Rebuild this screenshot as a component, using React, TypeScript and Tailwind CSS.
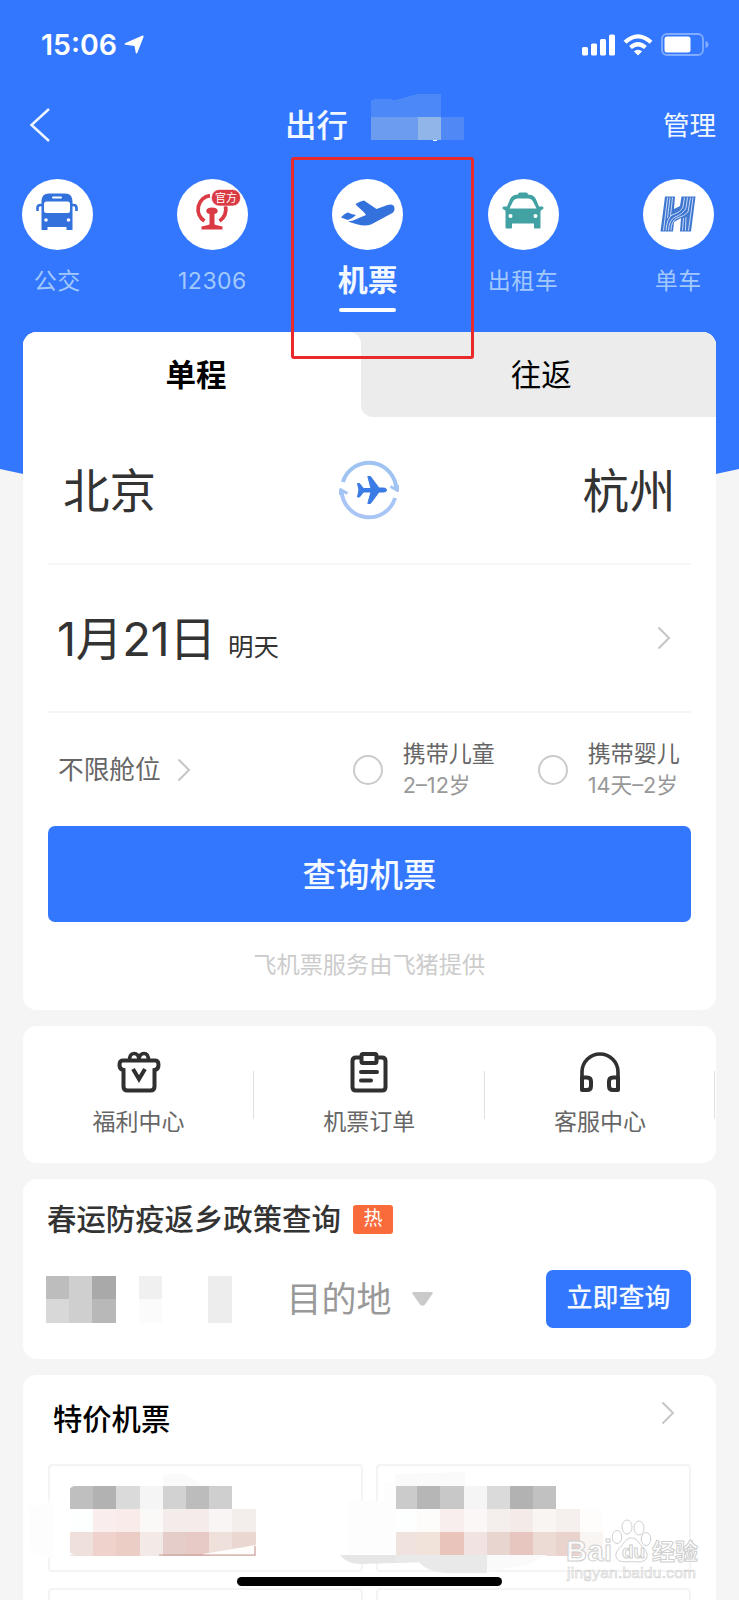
import type { ReactNode } from "react";

function Chevron({ className = "" }: { className?: string }) {
  return (
    <svg className={className} width="14" height="24" viewBox="0 0 14 24" fill="none">
      <path d="M1.500 1.500 12 12 1.500 22.500" stroke="#c6c6c6" strokeWidth="2" />
    </svg>
  );
}

function BusIcon() {
  return (
    <svg className="-mt-1" width="42" height="38" viewBox="0 0 42 38" fill="#3371dc">
      <path d="M5.500 37V9C5.500 3 8 .8 13 .5h16c5 .3 7.500 2.500 7.500 8.500v28h-6v-3h-19v3z" />
      <rect x="16" y="3.500" width="10" height="2" rx="1" fill="#fff" />
      <rect x="8" y="8.500" width="26" height="11.500" rx="2.500" fill="#fff" />
      <circle cx="10" cy="27" r="1.800" fill="#fff" />
      <circle cx="32.500" cy="27" r="1.800" fill="#fff" />
      <path d="M6 12H4.500Q1.500 12 1.500 15v3M36 12h1.500q3 0 3 3v3" fill="none" stroke="#3371dc" strokeWidth="2.600" />
    </svg>
  );
}

function RailIcon() {
  return (
    <svg width="62" height="62" viewBox="0 0 62 62" fill="#d93a43">
      <path d="M29 12.700A13.800 13.800 0 0 0 23.500 38M38.500 38A13.800 13.800 0 0 0 44.500 23" fill="none" stroke="#d93a43" strokeWidth="3.800" />
      <path d="M25.300 27.500q.5-3 5.700-3t5.700 3q.3 2.500-3.200 3.500v10.500q3 1.200 8 2v3h-21v-3q5-.8 8-2V31q-3.500-1-3.200-3.500z" />
      <rect x="30.500" y="6.500" width="29" height="16.500" rx="8" stroke="#fff" strokeWidth="0.600" />
      <text x="45" y="18.800" textAnchor="middle" fontSize="11" fill="#fff" className="font-['Noto_Sans_CJK_SC',sans-serif]">官方</text>
    </svg>
  );
}

function PlaneIcon() {
  return (
    <svg className="-mt-px" width="56" height="28" viewBox="0 0 56 28" fill="#3371dc">
      <path d="M1 17.500Q5 13 8 12.500 11 14 16 15q-4 4-8 5zM8 21.500l5-1 13-5.500C23 10 18.500 8 15.500 4Q20 1 24 .5l12.500 8.500 11-4c4-1.500 7 0 7 3.500 0 3-1 4-4 5.500L31 24.500c-7 2.500-14 0-23-3z" />
    </svg>
  );
}

function TaxiIcon() {
  return (
    <svg className="-mt-2" width="42" height="37" viewBox="0 0 42 37" fill="#42a2a3">
      <path d="M16 2.500Q16 .5 18 .5h6q2 0 2 2c5 .5 7 2 8.500 6l2.500 6h3.500q1 0 1 1.500t-1.500 1.500L38.500 19v16.500q0 1-1 1h-4.500q-1 0-1-1v-4H10v4q0 1-1 1H4.500q-1 0-1-1V19L2 17.500Q.5 17.500.5 16T1.500 14.500H5l2.500-6c1.500-4 3.500-5.500 8.500-6z" />
      <path d="M7.500 16.500 11 9.500Q12.500 6.500 16 6.500h10q3.500 0 5 3l3.500 7z" fill="#fff" />
      <circle cx="8.500" cy="24" r="2" fill="#fff" />
      <circle cx="33.500" cy="24" r="2" fill="#fff" />
    </svg>
  );
}

function BikeIcon() {
  return (
    <svg width="36" height="36" viewBox="0 0 36 36">
      <path d="M5 .5h10L14 13l6-3 1.500-9.500H35.500L31 35.500H20L21 22l-7 4-1 9.500H.5z" fill="#3f76cf" />
      <path
        d="M7.500 1.500 3.500 34.500M10 1.500 7.500 22M12.500 1.500 10.500 20M24.500 1.500 23 11Q21 16 12 19 7 22 6 34.500M27.500 1.500 26 12Q23 18 15 21 9 24 8.500 34.500M30.500 1.500 28 16Q25 20 17 22 11 25 11 34.500M33 1.500 28.500 34.500M26 21 25.500 34.500M23.500 22 22.500 34.500"
        fill="none"
        stroke="#d6e4fb"
        strokeWidth="0.900"
      />
    </svg>
  );
}

function NavItem({ label, active, children }: { label: string; active?: boolean; children: ReactNode }) {
  return (
    <div className="flex w-[155.300px] flex-col items-center">
      <div className="flex size-[71px] items-center justify-center rounded-full bg-white">{children}</div>
      {active ? (
        <>
          <span className="mt-[10px] text-[30px] leading-[40px] font-bold text-[#f1f8ff]">{label}</span>
          <span className="mt-[8px] h-1 w-[57px] rounded-full bg-white" />
        </>
      ) : (
        <span className="mt-[11px] text-[23px] leading-[40px] tracking-[0.500px] text-[#a2c9fd]">{label}</span>
      )}
    </div>
  );
}

function SwapIcon() {
  return (
    <svg width="62" height="62" viewBox="0 0 62 62" fill="none">
      <path d="M4.900 23A27.300 27.300 0 0 1 58.300 31" stroke="#a0c4f2" strokeWidth="4" />
      <path d="M57.100 39A27.300 27.300 0 0 1 3.700 31" stroke="#a9c5f5" strokeWidth="4" />
      <path d="M59.500 26v5.500l-7-4M2.500 36v-5.500l7 4" stroke="#a4c4f3" strokeWidth="3" strokeLinejoin="round" />
      <path d="M19.500 24.500h2l4 5h7.500L29.800 17.500h2.700l8.500 11.500h4.500q3 0 3 2t-3 2H41l-8.500 11.500h-2.700L33 33h-7.500l-4 5h-2l1.500-7z" fill="#3a7be6" stroke="#3a7be6" strokeLinejoin="round" />
    </svg>
  );
}

function GiftIcon() {
  return (
    <svg className="ml-[2px]" width="44" height="42" viewBox="0 0 44 42" fill="none" stroke="#303030" strokeWidth="4">
      <path d="M12.500 9.500q0-7 4.500-7t5 6q.5-6 5-6t4.500 7" strokeWidth="3.600" />
      <path d="M5.500 9.500h33q3 0 3 4.500t-4 5v16.500q0 4-4 4H10.500q-4 0-4-4V19q-4-.5-4-5t3-4.500z" />
      <path d="m16 18 6 10 6-10" />
    </svg>
  );
}

function OrderIcon() {
  return (
    <svg width="40" height="42" viewBox="0 0 40 42" fill="none" stroke="#303030" strokeWidth="4">
      <path d="M12 6.500H7q-3.500 0-3.500 3.500v26q0 3.500 3.500 3.500h26q3.500 0 3.500-3.500V10q0-3.500-3.500-3.500h-5" />
      <rect x="12.500" y="3" width="15" height="9" rx="1.500" />
      <path d="M12 21h16M12 29.500h10" strokeLinecap="round" />
    </svg>
  );
}

function HeadsetIcon() {
  return (
    <svg width="42" height="42" viewBox="0 0 42 42" fill="none" stroke="#303030" strokeWidth="4">
      <path d="M3 39V21a18 18 0 0 1 36 0v18" strokeWidth="3.600" />
      <path d="M3 26.500h5q4 0 4 4V35q0 4-4 4H3zM39 26.500h-5q-4 0-4 4V35q0 4 4 4h5z" strokeLinejoin="round" />
    </svg>
  );
}

function Mosaic({ rows, className = "" }: { rows: string[][]; className?: string }) {
  return (
    <svg className={className} width={rows[0].length * 23.2} height={rows.length * 23.2} shapeRendering="crispEdges">
      {rows.map((row, y) =>
        row.map((fill, x) => (
          <rect key={`${x}-${y}`} x={x * 23.2} y={y * 23.2} width="23.3" height="23.3" fill={fill} />
        )),
      )}
    </svg>
  );
}

function Option({ title, note, className = "" }: { title: string; note: string; className?: string }) {
  return (
    <div className={`flex items-center ${className}`}>
      <span className="size-[30px] shrink-0 rounded-full border-[2.500px] border-[#cbcbcb]" />
      <div className="ml-5 flex flex-col whitespace-nowrap">
        <span className="text-[23px] leading-[31px] text-[#666]">{title}</span>
        <span className="text-[21.700px] leading-[31px] text-[#999]">{note}</span>
      </div>
    </div>
  );
}

const visitorRows = [
  ["#bdbdbd", "#cfcfcf", "#a9a9a9", "#fff", "#f0f0f0", "#fff", "#fff", "#ededed"],
  ["#d8d8d8", "#cfcfcf", "#b8b8b8", "#fff", "#fbfbfb", "#fff", "#fff", "#ededed"],
];
const dealLeft = [
  ["#bfbfbf", "#b2b2b2", "#dadada", "#f5f5f5", "#d2d2d2", "#bcbcbc", "#cfcfcf", "#fff"],
  ["#fdfefe", "#f9eeed", "#f9ebea", "#fbf9f8", "#f4eceb", "#f4ebea", "#f8f5f4", "#f3eeec"],
  ["#f0e0dc", "#eed2cb", "#ebcdc6", "#f3e9e6", "#e5cec9", "#e7c9c5", "#efe0db", "#ead7d1"],
];
const dealRight = [
  ["#cbcbcb", "#b6b6b6", "#c8c8c8", "#f5f5f5", "#dadada", "#b2b2b2", "#c1c1c1", "#fff", "#fff"],
  ["#fdfefe", "#fdfcfb", "#f9eeee", "#fbf7f7", "#f4efed", "#f4eae8", "#f8f5f3", "#f5efed", "#fefdfc"],
  ["#f0e2de", "#f1e2da", "#e8c4ba", "#f0e3e2", "#e8d5cf", "#e6c6bf", "#ecdad5", "#ead3cd", "#f9f5f3"],
];

function Smudges() {
  return (
    <svg className="absolute top-[1464px] left-[23px]" width="693" height="120">
      <path d="M6 42q20-1 24-10v62H26Q10 92 6 82zM325 37h36V18h12v73h-48z" fill="#fdfdfd" />
      <path d="M140 12q20-8 40 10h-40zM372 10l70-2v14h-70z" fill="#fafafa" />
      <path d="M46 27v-5h5q-4 1-5 5zM46 86q2 5 6 5h-6z" fill="#fff" />
      <path d="m180 90 53-9v10h-53z" fill="#fffdfc" />
      <path d="M136 91h96V82" fill="none" stroke="#c79c96" strokeWidth="1.200" />
      <path d="M317 91h87v7l-66 2q-14 0-21-9z" fill="#e6e6e6" />
      <path d="M372 91h92v18h-40q-20-1-28-11h-24z" fill="#e9e9ea" />
      <path d="M464 91h60l-20 10-40 7z" fill="#fbfafa" />
    </svg>
  );
}

function Watermark() {
  return (
    <svg
      className="absolute top-[1515px] left-[564px] font-['Liberation_Sans','Noto_Sans_CJK_SC',sans-serif]"
      width="140"
      height="70"
      fill="#fff"
      fillOpacity="0.850"
      stroke="#cfcfcf"
      strokeWidth="1"
    >
      <text x="2" y="46" fontSize="29" fontWeight="bold" textLength="46">Bai</text>
      <ellipse cx="53" cy="22" rx="4.800" ry="6.500" />
      <ellipse cx="63" cy="12" rx="5" ry="7" />
      <ellipse cx="75" cy="13" rx="5" ry="7" />
      <ellipse cx="82" cy="24" rx="4.800" ry="6.500" />
      <path d="M67.500 23c5 0 7 4 10 8 4 4 7 7 5 12s-9 4-15 3.500c-6 .5-13 1-15-3.500s1-8 5-12c3-4 5-8 10-8z" />
      <text x="58" y="43" fontSize="19" fontWeight="bold">du</text>
      <text x="88" y="45" fontSize="23" fontWeight="bold">经验</text>
      <text x="3" y="63" fontSize="15.500" textLength="129" strokeWidth="0.600">jingyan.baidu.com</text>
    </svg>
  );
}

export default function App() {
  return (
    <div className="relative h-[1600px] w-[739px] overflow-hidden bg-[#f5f5f5] font-['Inter','Noto_Sans_CJK_SC',sans-serif]">
      <header className="h-[332px] bg-[#3377ff] text-white">
        <div className="flex h-[88px] items-center justify-between pr-[30px] pl-[41px]">
          <div className="flex items-center">
            <span className="mt-[2px] text-[28.500px] leading-10 font-semibold">15:06</span>
            <svg className="mt-[2px] ml-[7px]" width="20" height="20" viewBox="0 0 20 20" fill="#fff">
              <path d="M18 .8Q20.200 0 19.500 2L13.500 17.500q-1.200 2-1.800 0L10.500 11 1.500 9.800Q-.5 9 1.500 8z" />
            </svg>
          </div>
          <div className="mt-px flex items-center">
            <svg width="34" height="22" viewBox="0 0 34 22" fill="#fff">
              <rect x="1" y="13" width="6" height="8.500" rx="1.500" />
              <rect x="10" y="9.500" width="6" height="12" rx="1.500" />
              <rect x="19" y="5" width="6" height="16.500" rx="1.500" />
              <rect x="28" y="0.500" width="6" height="21" rx="1.500" />
            </svg>
            <svg className="ml-2" width="30" height="22" viewBox="0 0 30 22" fill="none" stroke="#fff" strokeWidth="4.200">
              <path d="M2 8.300Q15-3.500 28 8.300M7.500 13.500q7.500-6.500 15 0" />
              <path d="m10.800 17.200 4.200 4.300 4.200-4.300q-4.200-3-8.400 0z" fill="#fff" stroke="none" />
            </svg>
            <svg className="ml-2" width="48" height="23" viewBox="0 0 48 23" fill="none">
              <rect x="1" y="1" width="41" height="21" rx="5" stroke="#81acff" strokeWidth="1.800" />
              <rect x="3.500" y="3.500" width="26" height="16" rx="2.500" fill="#fff" />
              <path d="M44.500 8q3 1 3 3.500t-3 3.500z" fill="#81acff" />
            </svg>
          </div>
        </div>

        <div className="flex h-[74px] items-center pr-[23px] pl-[29px]">
          <svg width="22" height="34" viewBox="0 0 22 34" fill="none">
            <path d="M20 1 2.500 17 20 33" stroke="#eef7ff" strokeWidth="2.500" />
          </svg>
          <h1 className="mt-[2px] ml-[234px] text-[31.500px] leading-[46px] font-medium text-[#f1f8ff]">出行</h1>
          <svg className="mt-[-12px] ml-[23px]" width="94" height="50" shapeRendering="crispEdges">
            <path d="M0 6q12-3 24 0L47 0h23v23H0z" fill="#4c88f8" />
            <rect y="23" width="47" height="23" fill="#6c9cee" />
            <rect x="47" y="23" width="23" height="23" fill="#90b5e9" />
            <rect x="70" y="23" width="23" height="23" fill="#5089f6" />
            <path d="M61 46h5v1h-3z" fill="#fff" />
          </svg>
          <span className="ml-auto text-[26.500px] leading-[46px] text-[#f1f8ff]">管理</span>
        </div>

        <nav className="mt-[16.500px] -ml-[20.500px] flex w-[777px]">
          <NavItem label="公交"><BusIcon /></NavItem>
          <NavItem label="12306"><RailIcon /></NavItem>
          <NavItem label="机票" active><PlaneIcon /></NavItem>
          <NavItem label="出租车"><TaxiIcon /></NavItem>
          <NavItem label="单车"><BikeIcon /></NavItem>
        </nav>
      </header>

      <svg className="-mb-[160px] block" width="739" height="160" fill="#3377ff">
        <path d="M0 0h739v137Q370 220 0 137z" />
      </svg>

      <main className="relative flex flex-col gap-4 px-[23px] pr-[23.500px]">
        <section className="h-[678px] overflow-hidden rounded-[14px] bg-white">
          <div className="flex h-[85px] bg-[#ececec] text-[30.500px] text-black">
            <div className="flex w-[338px] items-center justify-center rounded-tr-[12px] bg-white pl-2 font-bold">单程</div>
            <div className="flex-1 bg-white">
              <div className="flex h-full items-center justify-center rounded-bl-[12px] bg-[#ececec] pl-[6px]">往返</div>
            </div>
          </div>

          <div className="mx-[25px] flex h-[148px] items-center justify-between border-b-2 border-[#f6f6f6] px-[15px] text-[46.500px] text-[#333]">
            <span className="mt-[3px]">北京</span>
            <SwapIcon />
            <span className="mt-[3px]">杭州</span>
          </div>

          <div className="mx-[25px] flex h-[148px] items-center justify-between border-b-2 border-[#f6f6f6] pr-5 pl-[9px] text-[#333]">
            <div className="mt-[2px] flex items-baseline">
              <span className="text-[47px] tracking-[-0.400px]">1月21日</span>
              <span className="ml-[12px] text-[25.500px]">明天</span>
            </div>
            <Chevron />
          </div>

          <div className="mx-[25px] flex h-[113px] items-center pl-[10px]">
            <span className="mt-[2px] text-[25.700px] text-[#666]">不限舱位</span>
            <Chevron className="ml-[16px]" />
            <Option className="ml-[162px]" title="携带儿童" note="2–12岁" />
            <Option className="ml-[43px]" title="携带婴儿" note="14天–2岁" />
          </div>

          <button className="mx-[25px] flex h-24 w-[643px] items-center justify-center rounded-[7px] bg-[#3377ff] pt-[2px] text-[33.500px] font-medium text-[#f4faff]">
            查询机票
          </button>
          <p className="mt-[26px] text-center text-[23.200px] leading-[34px] text-[#ccc]">飞机票服务由飞猪提供</p>
        </section>

        <section className="grid h-[137px] grid-cols-3 rounded-[14px] bg-white text-[23px] text-[#666]">
          {[
            { label: "福利中心", icon: <GiftIcon /> },
            { label: "机票订单", icon: <OrderIcon /> },
            { label: "客服中心", icon: <HeadsetIcon /> },
          ].map(({ label, icon }) => (
            <div key={label} className="flex items-center">
              <div className="flex flex-1 flex-col items-center pt-px pl-px">
                {icon}
                <span className="mt-[12px] leading-[34px]">{label}</span>
              </div>
              <span className="h-12 w-px bg-[#e0e0e0]" />
            </div>
          ))}
        </section>

        <section className="h-[180px] rounded-[14px] bg-white px-[25px] pt-[24px]">
          <div className="flex h-[34px] items-center">
            <h2 className="-ml-px text-[29.400px] leading-[34px] font-medium text-[#333]">春运防疫返乡政策查询</h2>
            <span className="-mt-px ml-[12px] flex h-[29px] w-10 items-center justify-center rounded-[3px] bg-[#f96b3b] text-[19px] text-white">热</span>
          </div>
          <div className="mt-[33px] flex h-[58px] items-center">
            <Mosaic className="mt-px -ml-[2px]" rows={visitorRows} />
            <span className="ml-[55px] text-[35px] text-[#999]">目的地</span>
            <svg className="ml-[20px]" width="21" height="14" viewBox="0 0 21 14" fill="#cacaca">
              <path d="M2 0h17q3 0 1 2.500l-7 10q-2.500 2.500-5 0l-7-10Q-1 0 2 0z" />
            </svg>
            <button className="-mr-[0.500px] ml-auto h-[58px] w-[145px] rounded-[7px] bg-[#3377ff] pb-[3px] text-[26px] font-medium text-[#f4faff]">立即查询</button>
          </div>
        </section>

        <section className="h-[260px] rounded-[14px] bg-white px-[25px] pt-6">
          <div className="flex h-10 items-center justify-between pr-4 pl-[5px]">
            <h2 className="mt-[2px] text-[29.300px] leading-10 font-medium text-black">特价机票</h2>
            <Chevron className="-mt-3" />
          </div>
          <div className="mt-[25px] grid grid-cols-2 gap-x-[13px] gap-y-4">
            <div className="h-[108px] rounded-[4px] border-2 border-[#f4f4f4] pt-5 pl-5">
              <Mosaic rows={dealLeft} />
            </div>
            <div className="h-[108px] rounded-[4px] border-2 border-[#f4f4f4] pt-5 pl-4">
              <Mosaic rows={dealRight} />
            </div>
            <div className="h-[108px] rounded-[4px] border-2 border-[#f4f4f4]" />
            <div className="h-[108px] rounded-[4px] border-2 border-[#f4f4f4]" />
          </div>
        </section>
      </main>

      <div className="absolute top-[157px] left-[291px] h-[202px] w-[183px] rounded-[3px] border-3 border-[#ea2a2a]" />
      <Smudges />
      <Watermark />
      <div className="absolute top-[1577px] left-[237px] h-[9px] w-[265px] rounded-full bg-black" />
    </div>
  );
}
